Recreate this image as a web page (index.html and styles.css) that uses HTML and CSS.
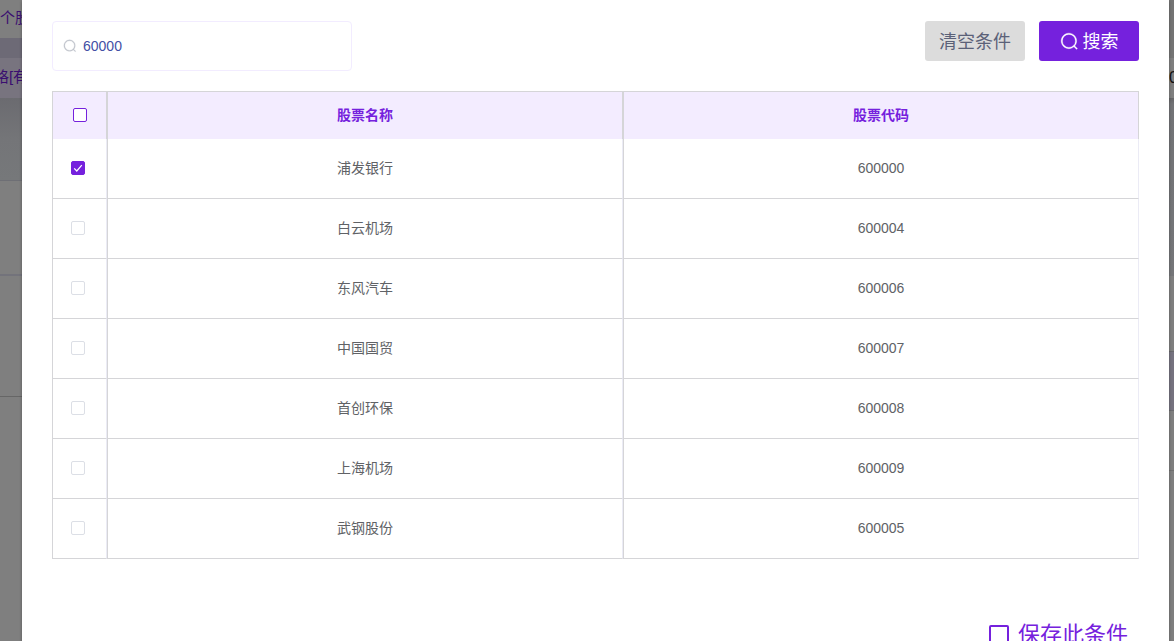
FILE: index.html
```html
<!DOCTYPE html>
<html lang="zh-CN">
<head>
<meta charset="utf-8">
<title>股票搜索</title>
<link rel="stylesheet" href="styles.css">
</head>
<body>
<div class="screen">
  <aside class="backdrop backdrop-left">
    <div class="strip strip-title">个股</div>
    <div class="strip strip-band"></div>
    <div class="strip strip-tab">格[有</div>
    <div class="strip strip-fade"></div>
    <div class="strip strip-row"></div>
    <div class="strip strip-row-last"></div>
  </aside>
  <main class="dialog">
    <form class="toolbar">
      <label class="search">
        <svg class="icon" viewBox="0 0 1024 1024" aria-hidden="true"><path d="m795.904 750.72 124.992 124.928a32 32 0 0 1-45.248 45.248L750.656 795.904a416 416 0 1 1 45.248-45.248zM480 832a352 352 0 1 0 0-704 352 352 0 0 0 0 704z"/></svg>
        <input class="search-input" type="text" value="60000" aria-label="股票代码">
      </label>
      <div class="actions">
        <button class="btn btn-clear" type="button">清空条件</button>
        <button class="btn btn-search" type="button"><svg class="icon" viewBox="0 0 1024 1024" aria-hidden="true"><path d="m795.904 750.72 124.992 124.928a32 32 0 0 1-45.248 45.248L750.656 795.904a416 416 0 1 1 45.248-45.248zM480 832a352 352 0 1 0 0-704 352 352 0 0 0 0 704z"/></svg>搜索</button>
      </div>
    </form>
    <table class="stocks">
      <thead>
        <tr><th class="pick"><input class="check check-all" type="checkbox" aria-label="全选"></th><th class="name">股票名称</th><th>股票代码</th></tr>
      </thead>
      <tbody>
        <tr><td class="pick"><input class="check" type="checkbox" aria-label="浦发银行" checked></td><td class="name">浦发银行</td><td>600000</td></tr>
        <tr><td class="pick"><input class="check" type="checkbox" aria-label="白云机场"></td><td class="name">白云机场</td><td>600004</td></tr>
        <tr><td class="pick"><input class="check" type="checkbox" aria-label="东风汽车"></td><td class="name">东风汽车</td><td>600006</td></tr>
        <tr><td class="pick"><input class="check" type="checkbox" aria-label="中国国贸"></td><td class="name">中国国贸</td><td>600007</td></tr>
        <tr><td class="pick"><input class="check" type="checkbox" aria-label="首创环保"></td><td class="name">首创环保</td><td>600008</td></tr>
        <tr><td class="pick"><input class="check" type="checkbox" aria-label="上海机场"></td><td class="name">上海机场</td><td>600009</td></tr>
        <tr><td class="pick"><input class="check" type="checkbox" aria-label="武钢股份"></td><td class="name">武钢股份</td><td>600005</td></tr>
      </tbody>
    </table>
    <label class="save"><input class="check check-save" type="checkbox">保存此条件</label>
  </main>
  <aside class="backdrop backdrop-right">
    <div class="strip side-top"></div>
    <div class="strip side-tab">0</div>
    <div class="strip side-panel"></div>
    <div class="strip side-gap"></div>
    <div class="strip side-band"></div>
    <div class="strip side-row"></div>
    <div class="strip side-rest"></div>
  </aside>
</div>
</body>
</html>
```
FILE: styles.css
```css
* { box-sizing: border-box; }

body {
  margin: 0;
  font-family: "Liberation Sans", "Noto Sans CJK SC", sans-serif;
  font-size: 14px;
  color: #606266;
}

.screen {
  display: grid;
  grid-template-columns: 22px minmax(0, 1fr) 5px;
  height: 100vh;
  overflow: hidden;
  background: #7f7f7f;
}

.backdrop {
  display: flex;
  flex-direction: column;
  overflow: hidden;
}
.strip { flex: none; white-space: nowrap; }
.strip-title { height: 38px; line-height: 36px; font-size: 15px; color: #3a0e70; }
.strip-band { height: 20px; background: #6d6a76; }
.strip-tab {
  display: flex;
  justify-content: center;
  height: 40px;
  line-height: 38px;
  font-size: 15px;
  color: #3a0e70;
  background: #78747f;
}
.strip-fade {
  height: 83px;
  background: linear-gradient(#6b6b70, #747578 50%, #76787a);
  border-bottom: 1px solid #6e6f75;
}
.strip-row { height: 95px; border-bottom: 2px solid #73737b; }
.strip-row-last { height: 121px; border-bottom: 1px solid #666; }

.side-top { height: 58px; background: #747474; }
.side-tab { height: 40px; line-height: 40px; font-size: 16px; color: #111; background: #7f7f7f; }
.side-panel { height: 178px; background: linear-gradient(#656567, #727376 6px, #757679); }
.side-gap { height: 76px; border-bottom: 1px solid #68686c; }
.side-band { height: 59px; background: #75727f; border-bottom: 1px solid #6a6a6e; }
.side-row { height: 60px; border-bottom: 1px solid #707070; }
.side-rest { flex: 1; }

.dialog {
  position: relative;
  display: flex;
  flex-direction: column;
  padding: 21px 30px 0;
  background: #fff;
  box-shadow: 0 1px 3px rgba(0, 0, 0, 0.3);
}

.toolbar {
  display: flex;
  justify-content: space-between;
  align-items: flex-start;
  margin-bottom: 20px;
}
.icon {
  flex: none;
  fill: currentColor;
  stroke: currentColor;
  stroke-width: 20px;
}
.search {
  display: flex;
  align-items: center;
  gap: 6px;
  width: 300px;
  height: 50px;
  padding: 0 10px;
  border: 1px solid #f2ecff;
  border-radius: 4px;
  color: #c0c4cc;
}
.search .icon { width: 14px; height: 14px; }
.search-input {
  flex: 1;
  min-width: 0;
  padding: 0;
  border: 0;
  outline: 0;
  background: none;
  font: inherit;
  color: #434fa5;
}
.actions { display: flex; gap: 14px; }
.btn {
  display: flex;
  align-items: center;
  justify-content: center;
  gap: 4px;
  width: 100px;
  height: 40px;
  padding: 0 0 2px;
  border: 0;
  border-radius: 3px;
  font-family: inherit;
  font-size: 18px;
}
.btn .icon { width: 19px; height: 19px; margin-top: 2px; }
.btn-clear { background: #dcdcdc; color: #5b6178; }
.btn-search { background: #7521dd; color: #fff; }

.stocks {
  width: 100%;
  table-layout: fixed;
  border-collapse: separate;
  border-spacing: 0;
  border-top: 1px solid #d5d5d8;
  border-left: 1px solid #d5d5d8;
}
.stocks th {
  height: 47px;
  padding: 0 0 4px;
  background: #f3ecff;
  color: #7521dd;
  border-right: 1px solid #d5d5d8;
}
.stocks td {
  height: 60px;
  padding: 0 0 2px;
  text-align: center;
  border-right: 1px solid #ebebf5;
  border-bottom: 1px solid #d5d5d8;
}
.stocks th + th,
.stocks td + td { border-left: 1px solid #d5d5d8; }
.stocks td.name { padding-bottom: 4px; }
.stocks .pick { width: 54px; padding-bottom: 2px; }
.stocks td.pick { padding-right: 3px; }

.check {
  appearance: none;
  display: block;
  width: 14px;
  height: 14px;
  margin: 0 auto;
  border: 1px solid #dcdfe6;
  border-radius: 2px;
  background: #fff;
}
.check:checked {
  border-color: #7521dd;
  background: #7521dd url("data:image/svg+xml,%3Csvg xmlns='http://www.w3.org/2000/svg' viewBox='0 0 12 12'%3E%3Cpath d='M2.2 6.3 4.8 9 9.8 3.2' fill='none' stroke='white' stroke-width='1.2'/%3E%3C/svg%3E") center / 12px no-repeat;
}
.check-all { border-color: #7521dd; }

.save {
  display: flex;
  align-items: center;
  align-self: flex-end;
  gap: 9px;
  margin: 60px 11px 0 0;
  line-height: 32px;
  font-size: 22px;
  color: #7521dd;
}
.check-save {
  width: 20px;
  height: 20px;
  margin: 0;
  border: 2px solid #7521dd;
}
```
